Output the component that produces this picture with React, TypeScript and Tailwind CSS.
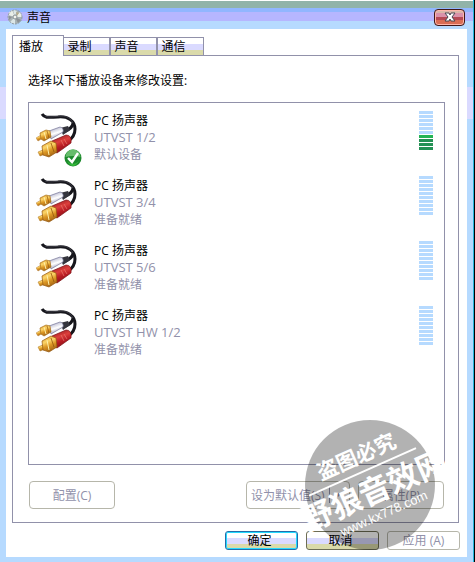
import React from 'react';

interface Device {
  name: string;
  port: string;
  status: string;
  isDefault?: boolean;
  level: number;
}

const tabs = ['播放', '录制', '声音', '通信'];

const devices: Device[] = [
  { name: 'PC 扬声器', port: 'UTVST 1/2', status: '默认设备', isDefault: true, level: 4 },
  { name: 'PC 扬声器', port: 'UTVST 3/4', status: '准备就绪', level: 0 },
  { name: 'PC 扬声器', port: 'UTVST 5/6', status: '准备就绪', level: 0 },
  { name: 'PC 扬声器', port: 'UTVST HW 1/2', status: '准备就绪', level: 0 },
];

const striped =
  'bg-[linear-gradient(#fff_0_36%,#dadaff_36%_70%,#dadaaa_70%)]';

const SpeakerIcon: React.FC = () => (
  <svg viewBox="0 0 16 16" className="size-4" aria-hidden="true">
    <circle cx="8" cy="8" r="7" fill="#a9b3b5" />
    <path d="M8 8 1 6a7 7 0 0 1 4-5zM8 8l5-5a7 7 0 0 1 2 5z" fill="#e9eee8" />
    <path d="M8 8l-5 5a7 7 0 0 0 5 2zM8 8l2-7-4 0z" fill="#dce6e6" />
    <path d="M8 8l6 3-3 3zM2 7l3 1-3 3z" fill="#8c9194" />
    <path d="M9 3l3 1-2 3z" fill="#b8aa84" />
    <circle cx="8" cy="8" r="2" fill="#f4f5ee" stroke="#868f94" />
    <circle cx="8" cy="8" r="7" fill="none" stroke="#8f9ca6" strokeDasharray="2 1" />
  </svg>
);

const CableIcon: React.FC = () => (
  <svg viewBox="0 0 42 46" className="h-[46px] w-[42px]" aria-hidden="true">
    <defs>
      <linearGradient id="gold" x1="0.2" y1="0" x2="0.6" y2="1">
        <stop offset="0" stopColor="#e0a030" />
        <stop offset="0.35" stopColor="#fbd468" />
        <stop offset="0.6" stopColor="#dc9724" />
        <stop offset="1" stopColor="#9c5e14" />
      </linearGradient>
      <linearGradient id="red" x1="0.3" y1="0" x2="0.7" y2="1">
        <stop offset="0" stopColor="#9c1a22" />
        <stop offset="0.35" stopColor="#dc403c" />
        <stop offset="0.6" stopColor="#b81c24" />
        <stop offset="1" stopColor="#7c1014" />
      </linearGradient>
      <linearGradient id="silver" x1="0.3" y1="0" x2="0.7" y2="1">
        <stop offset="0" stopColor="#a8a8c4" />
        <stop offset="0.5" stopColor="#ffffff" />
        <stop offset="1" stopColor="#7c7ca0" />
      </linearGradient>
    </defs>
    <path d="M6 2C9 7 15 5 22 5c10-1 17 4 17 12 0 6-2 9-7 12" fill="none" stroke="#16161c" strokeWidth="3" />
    <path d="M9 4c5 2 10 0 17 0 5 0 9 3 11 7" fill="none" stroke="#55555f" strokeWidth="0.6" />
    <path d="M37 11c0 4-3 6-9 9" fill="none" stroke="#16161c" strokeWidth="3" />
    <path d="M24 16l8-2 2 4-7 5z" fill="#34343c" />
    <path d="M13 19l11-4q4 1 3 5l-12 7z" fill="url(#silver)" stroke="#77779a" strokeWidth="0.7" />
    <path d="M0 26l5-3 2 3-5 3z" fill="url(#gold)" stroke="#b98240" strokeWidth="0.5" />
    <path d="M4 21l6-3 4 1 1 6-7 4-3-2z" fill="url(#gold)" stroke="#a8701c" strokeWidth="0.7" />
    <path d="M8 20l2 7" stroke="#fff0a8" />
    <path d="M11 19l2 7" stroke="#94580f" strokeWidth="0.7" />
    <path d="M16 29l14-6q6 0 5 8L21 41l-4-2z" fill="url(#red)" stroke="#7c1014" strokeWidth="0.7" />
    <path d="M25 28l3 6M28 27l3 5" stroke="#ea7a70" strokeWidth="0.7" />
    <path d="M2 40l7-3 3 4-8 3z" fill="url(#gold)" stroke="#a8701c" strokeWidth="0.5" />
    <path d="M6 34l9-5 5 2 1 9-8 5-6-2z" fill="url(#gold)" stroke="#94580f" strokeWidth="0.7" />
    <path d="M11 33l2 10" stroke="#fff0a8" />
    <path d="M15 31l3 9" stroke="#94580f" strokeWidth="0.8" />
  </svg>
);

const DefaultBadge: React.FC = () => (
  <svg viewBox="0 0 18 18" className="absolute left-7 top-[38px] size-[18px]" aria-hidden="true">
    <circle cx="9" cy="9" r="8.5" fill="#1c8a2c" />
    <path d="M1.5 8a7.5 7.5 0 0 1 15 0Q9 6 1.5 8z" fill="#66bd6b" />
    <path d="M3 12q6 6 12 0-3 5-6 5t-6-5z" fill="#35b73b" />
    <path d="M4 9l4 4 6-9" fill="none" stroke="#fff" strokeWidth="2.4" />
  </svg>
);

const LevelMeter: React.FC<{ level: number }> = ({ level }) => (
  <div className="flex flex-col gap-px" role="img" aria-label="音量">
    {Array.from({ length: 10 }, (_, i) => {
      const fromBottom = 10 - i;
      let color = 'bg-[#b6daff]';
      if (fromBottom <= level) {
        color = fromBottom === level ? 'bg-[#24b455]' : 'bg-[#249155]';
      }
      return <span key={i} className={`h-[3px] w-3.5 ${color}`} />;
    })}
  </div>
);

const Watermark: React.FC = () => (
  <svg
    viewBox="0 0 176 140"
    className="pointer-events-none absolute bottom-[5px] right-[7px] h-[140px] w-44"
    aria-hidden="true"
  >
    <circle cx="79" cy="68" r="65" fill="#000" fillOpacity="0.3" />
    <g
      transform="rotate(-24 79 68)"
      fill="#fff"
      textAnchor="middle"
      fontFamily="'Noto Sans CJK SC', sans-serif"
      fontWeight="bold"
    >
      <text x="78" y="44" fontSize="21">盗图必究</text>
      <path d="M19 53h117" stroke="#fff" strokeWidth="2" />
      <text x="81" y="86" fontSize="31">野狼音效网</text>
      <text x="80" y="104" fontSize="13" fontWeight="normal" fontFamily="'Liberation Sans', sans-serif">
        www.kx778.com
      </text>
    </g>
  </svg>
);

const App: React.FC = () => {
  return (
    <div className="relative flex min-h-screen flex-col overflow-hidden border-r border-black bg-[linear-gradient(#b6daff_0_87px,#dadaff_87px_119px,#b6daff_119px)] font-['Open_Sans','Noto_Sans_CJK_SC',sans-serif] text-xs leading-[17px] text-black">
      <header className="flex h-[29px] items-center gap-1 border-t border-white bg-[linear-gradient(#91b3a9_0_7px,#91b6ff_7px_11px,#b6b6ff_11px_20px,#b6daff_20px)] pl-[7px] pr-[9px] pt-1">
        <SpeakerIcon />
        <h1 className="flex-1">声音</h1>
        <button
          aria-label="关闭"
          className="flex h-[17px] w-[31px] items-center justify-center rounded-sm border border-[#401818] bg-[linear-gradient(#dab6aa_0_3px,#da91aa_3px_7px,#b64855_7px_10px,#da6d55_10px)] shadow-[inset_0_0_0_1px_#ffb6aa]"
        >
          <svg viewBox="0 0 12 10" className="h-2.5 w-3">
            <path d="M1 1h4l1 2 1-2h4L8 5l3 4H7L6 7 5 9H1l3-4z" fill="#fff" stroke="#484855" />
          </svg>
        </button>
      </header>

      <main className="mb-[5px] ml-1.5 mr-[7px] flex flex-1 flex-col bg-white px-1.5 pb-[7px] pt-1.5">
        <div role="tablist" className="flex items-end">
          {tabs.map((tab, i) =>
            i === 0 ? (
              <button
                key={tab}
                role="tab"
                aria-selected="true"
                className="relative -mb-px h-[21px] w-[52px] border border-b-0 border-[#9191aa] bg-white pr-3.5"
              >
                {tab}
              </button>
            ) : (
              <button
                key={tab}
                role="tab"
                aria-selected="false"
                className={`-ml-px mr-px h-[18px] w-[47px] border border-b-0 border-[#9191aa] pr-3.5 ${striped}`}
              >
                {tab}
              </button>
            ),
          )}
        </div>

        <section className="mr-[2px] flex flex-1 flex-col border border-[#9191aa] pb-[13px] pl-[15px] pr-[13px] pt-4">
          <p id="hint">选择以下播放设备来修改设置:</p>
          <ul aria-labelledby="hint" className="mt-[13px] flex-1 border border-[#9191aa] pt-2">
            {devices.map((device) => (
              <li key={device.port} className="flex h-[65px] items-start pl-[7px] pr-[11px]">
                <div className="relative mr-4 pt-px">
                  <CableIcon />
                  {device.isDefault && <DefaultBadge />}
                </div>
                <div className="flex-1 pt-px">
                  <p>{device.name}</p>
                  <p className="text-[13px] leading-[17px] text-[#9191aa]">{device.port}</p>
                  <p className="text-[#9191aa]">{device.status}</p>
                </div>
                <LevelMeter level={device.level} />
              </li>
            ))}
          </ul>
          <div className="mt-4 flex h-7 px-px text-[#9191aa]">
            <button disabled className="mr-auto w-[86px] rounded-sm border border-[#b6b6aa]">
              配置(C)
            </button>
            <button
              disabled
              className="mr-2 flex w-[104px] items-center rounded-sm border border-[#b6b6aa] pl-1"
            >
              <span>设为默认值(S)</span>
              <span className="ml-1 h-4 border-l border-[#9191aa]" />
              <span className="ml-1 border-x-4 border-t-4 border-x-transparent border-t-[#9191aa]" />
            </button>
            <button disabled className="w-[86px] rounded-sm border border-[#b6b6aa]">
              属性(P)
            </button>
          </div>
        </section>

        <footer className="mr-px mt-2 flex h-[19px] justify-end gap-2">
          <button
            className={`w-[73px] rounded-[3px] border border-[#246daa] pr-1 leading-4 shadow-[inset_0_0_0_1px_#24daff] ${striped}`}
          >
            确定
          </button>
          <button className={`w-[73px] rounded-[3px] border border-[#6d6d55] pr-1 leading-4 ${striped}`}>
            取消
          </button>
          <button
            disabled
            className="w-[73px] rounded-[3px] border border-[#b6b6aa] leading-4 text-[#9191aa]"
          >
            应用 (A)
          </button>
        </footer>
      </main>
      <div className="pointer-events-none absolute inset-y-0 right-0 border-r border-[#24b6da]" />
      <Watermark />
    </div>
  );
};

export default App;
